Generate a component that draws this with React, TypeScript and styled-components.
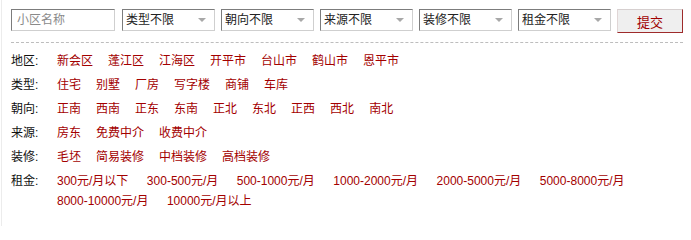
import React from 'react'
import styled, { createGlobalStyle } from 'styled-components'

const GlobalStyle = createGlobalStyle`
  body {
    margin: 0;
    background: #fff;
    font-family: "Liberation Sans", "Noto Sans CJK SC", sans-serif;
    font-size: 12px;
  }
`

const Panel = styled.div`
  margin-left: 1px;
  border-left: 1px solid #ececec;
  padding: 9px 8px 0 9px;
  min-height: 226px;
  box-sizing: border-box;
`

const SearchBar = styled.form`
  display: flex;
  align-items: flex-start;
  gap: 6px;
  height: 33px;
  border-bottom: 1px dashed #bdbdbd;
`

const insetBorder = `
  border-style: solid;
  border-width: 1px;
  border-color: #7c7c7c #cfcfcf #cfcfcf #7c7c7c;
`

const NameInput = styled.input`
  ${insetBorder}
  width: 104px;
  height: 22px;
  box-sizing: border-box;
  margin: 0 1px 0 0;
  padding: 0 5px;
  font-family: inherit;
  font-size: 12px;
  color: #333;
  outline: none;

  &::placeholder {
    color: #8a8a8a;
  }
`

const SelectWrap = styled.div`
  position: relative;
  width: 93px;
  height: 22px;
`

const Select = styled.select`
  ${insetBorder}
  appearance: none;
  width: 100%;
  height: 100%;
  box-sizing: border-box;
  margin: 0;
  padding: 0 14px 0 3px;
  background: #fff;
  font-family: inherit;
  font-size: 12px;
  color: #222;
  outline: none;
`

const Caret = styled.span`
  position: absolute;
  right: 9px;
  top: 9px;
  width: 0;
  height: 0;
  border-left: 4px solid transparent;
  border-right: 4px solid transparent;
  border-top: 4px solid #a8a8a8;
  pointer-events: none;
`

const SubmitButton = styled.button`
  width: 66px;
  height: 24px;
  margin: 0;
  padding: 0;
  border-style: solid;
  border-width: 1px;
  border-color: #d6cfcf #9e2b2b #9e2b2b #e0d6d6;
  background: #efefef;
  font-family: inherit;
  font-size: 13px;
  color: #a00000;
  cursor: pointer;
`

const FilterList = styled.div`
  padding-top: 6px;
`

const FilterRow = styled.div`
  display: flex;
  align-items: flex-start;
  padding: 2px 0;
  line-height: 20px;
`

const FilterLabel = styled.div`
  flex: none;
  width: 46px;
  color: #111;
`

const Options = styled.div`
  flex: 1;
  display: flex;
  flex-wrap: wrap;
`

const OptionLink = styled.a<{ $gap: number }>`
  margin-right: ${p => p.$gap}px;
  color: #a30000;
  text-decoration: none;
  white-space: nowrap;
  cursor: pointer;

  &:hover {
    text-decoration: underline;
  }
`

const selects = [
  { name: 'type', label: '类型不限' },
  { name: 'facing', label: '朝向不限' },
  { name: 'source', label: '来源不限' },
  { name: 'decor', label: '装修不限' },
  { name: 'rent', label: '租金不限' },
]

const filters = [
  { label: '地区:', gap: 15, options: ['新会区', '蓬江区', '江海区', '开平市', '台山市', '鹤山市', '恩平市'] },
  { label: '类型:', gap: 15, options: ['住宅', '别墅', '厂房', '写字楼', '商铺', '车库'] },
  { label: '朝向:', gap: 15, options: ['正南', '西南', '正东', '东南', '正北', '东北', '正西', '西北', '南北'] },
  { label: '来源:', gap: 15, options: ['房东', '免费中介', '收费中介'] },
  { label: '装修:', gap: 15, options: ['毛坯', '简易装修', '中档装修', '高档装修'] },
  {
    label: '租金:',
    gap: 18.5,
    options: [
      '300元/月以下',
      '300-500元/月',
      '500-1000元/月',
      '1000-2000元/月',
      '2000-5000元/月',
      '5000-8000元/月',
      '8000-10000元/月',
      '10000元/月以上',
    ],
  },
]

const App: React.FC = () => {
  return (
    <>
      <GlobalStyle />
      <Panel>
        <SearchBar onSubmit={e => e.preventDefault()}>
          <NameInput placeholder="小区名称" />
          {selects.map(s => (
            <SelectWrap key={s.name}>
              <Select name={s.name} defaultValue="">
                <option value="">{s.label}</option>
              </Select>
              <Caret />
            </SelectWrap>
          ))}
          <SubmitButton type="submit">提交</SubmitButton>
        </SearchBar>

        <FilterList>
          {filters.map(f => (
            <FilterRow key={f.label}>
              <FilterLabel>{f.label}</FilterLabel>
              <Options>
                {f.options.map(o => (
                  <OptionLink key={o} $gap={f.gap}>{o}</OptionLink>
                ))}
              </Options>
            </FilterRow>
          ))}
        </FilterList>
      </Panel>
    </>
  )
}

export default App
